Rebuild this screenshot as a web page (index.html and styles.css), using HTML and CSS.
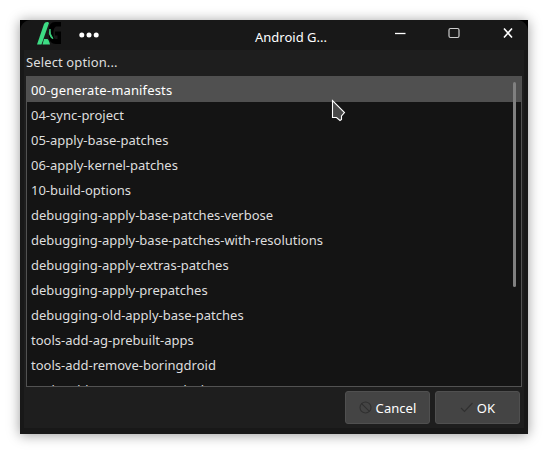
FILE: index.html
```html
<!DOCTYPE html>
<html lang="en">
<head>
<meta charset="utf-8">
<title>Android G...</title>
<link rel="stylesheet" href="styles.css">
</head>
<body>
<div class="window">
  <div class="frame">
  <header class="titlebar">
    <svg class="logo" width="26" height="24" viewBox="0 0 26 24">
      <path d="M18 1H24V5.5H19Q16.5 7 16.5 11V14Q16.5 18 19 18H20.5V14.5H18V10.5H24V23H19Q12 23 12 15V9Q12 1 18 1Z" fill="#000"/>
      <path d="M0 23.5L7 3Q8 0.5 11 1L12 2L4.5 23.5Z" fill="#3ddc84"/>
      <path d="M5.5 23.5L7 18H10.5Q12 19 13 23.5Z" fill="#3ddc84"/>
      <path d="M13 8Q12.500 13 16 17.500L14.500 17Q11 13 13 8Z" fill="#3ddc84" stroke="#3ddc84" stroke-width=".8"/>
    </svg>
    <svg class="dots" width="20" height="6" viewBox="0 0 20 6"><g fill="#fff"><circle cx="2.8" cy="3" r="2.5"/><circle cx="10" cy="3" r="2.5"/><circle cx="17.2" cy="3" r="2.5"/></g></svg>
    <span class="title">Android G...</span>
    <svg class="controls" width="120" height="14" viewBox="0 0 120 14">
      <path d="M0 7.5H10.500" stroke="#fff" stroke-width="1.3"/>
      <rect x="54" y="2.500" width="10" height="9" rx="1.500" fill="none" stroke="#ccc" stroke-width="1.2"/>
      <path d="M109 2.500L117 11.500M117 2.500L109 11.500" stroke="#fff" stroke-width="1.6"/>
    </svg>
  </header>
  <main class="content">
    <p class="label">Select option...</p>
    <div class="list">
      <ul class="rows">
        <li class="selected">00-generate-manifests</li>
        <li>04-sync-project</li>
        <li>05-apply-base-patches</li>
        <li>06-apply-kernel-patches</li>
        <li>10-build-options</li>
        <li>debugging-apply-base-patches-verbose</li>
        <li>debugging-apply-base-patches-with-resolutions</li>
        <li>debugging-apply-extras-patches</li>
        <li>debugging-apply-prepatches</li>
        <li>debugging-old-apply-base-patches</li>
        <li>tools-add-ag-prebuilt-apps</li>
        <li>tools-add-remove-boringdroid</li>
        <li>tools-add-remove-smartdock</li>
      </ul>
      <div class="scrollbar"></div>
    </div>
    <footer class="actions">
      <button class="button cancel"><svg width="13" height="13" viewBox="0 0 13 13"><circle cx="6.5" cy="6.5" r="5.5"/><path d="M2.6 2.6L10.4 10.4"/></svg>Cancel</button>
      <button class="button ok"><svg width="13" height="13" viewBox="0 0 13 13"><path d="M1 7L4.5 10.5L12.5 2"/></svg>OK</button>
    </footer>
  </main>
  </div>
</div>
<svg class="cursor" width="15" height="23" viewBox="0 0 15 23"><path d="M1.500 1.500V18.5H5.5L9 21.5L10.5 20.5V17L13.5 13.5Z" fill="#494949" stroke="#fff" stroke-width="1.1"/></svg>
</body>
</html>
```

FILE: styles.css
```css
* { box-sizing: border-box; }
body {
  margin: 0;
  padding: 20px;
  height: 454px;
  overflow: hidden;
  background: #fff;
  color: #dedede;
  font: 13px/20px "Noto Sans", sans-serif;
}
.window {
  width: 508px;
  height: 414px;
  background: #000;
  box-shadow: 0 1px 12px rgba(0, 0, 0, .4);
}
.frame {
  height: 414px;
  padding: 0 4px 6px;
  background: #181818;
  border-radius: 11px 11px 0 0;
}
.titlebar {
  display: flex;
  height: 30px;
  padding-left: 13px;
}
.logo { margin-top: 1px; }
.dots { margin: 12px 0 0 16px; }
.title {
  width: 80px;
  margin: 7px 0 0 156px;
  color: #fff;
}
.controls { margin: 6px 0 0 60px; }
.content {
  height: 378px;
  padding: 0 2px;
  background: #1e1e1e;
}
.label {
  height: 26px;
  margin: 0;
  padding-top: 2px;
  letter-spacing: .12px;
}
.list {
  position: relative;
  height: 311px;
  border: 1px solid #525252;
  border-top: 0;
  background: #141414;
  overflow: hidden;
}
.rows {
  margin: 0;
  padding: 0;
  list-style: none;
}
.rows li {
  height: 25px;
  padding: 3px 4px 0;
}
.rows .selected {
  height: 26px;
  margin-bottom: -1px;
  padding-top: 4px;
  background: #505050;
  color: #fff;
  letter-spacing: .15px;
}
.rows .selected ~ li { padding-top: 4px; }
.scrollbar {
  position: absolute;
  top: 6px;
  right: 5px;
  width: 3px;
  height: 205px;
  border-radius: 2px;
  background: #808080;
}
.actions {
  display: flex;
  justify-content: flex-end;
  gap: 5px;
  padding: 4px 2px 0 0;
}
.button {
  display: flex;
  align-items: center;
  justify-content: center;
  gap: 4px;
  width: 85px;
  height: 33px;
  padding: 0;
  border: 1px solid #505050;
  border-radius: 3px;
  background: #444;
  color: #fff;
  font: inherit;
  letter-spacing: .05px;
}
.button svg {
  fill: none;
  stroke: #303030;
  stroke-width: 1.1;
}
.cursor {
  position: absolute;
  left: 331px;
  top: 99px;
}
```
